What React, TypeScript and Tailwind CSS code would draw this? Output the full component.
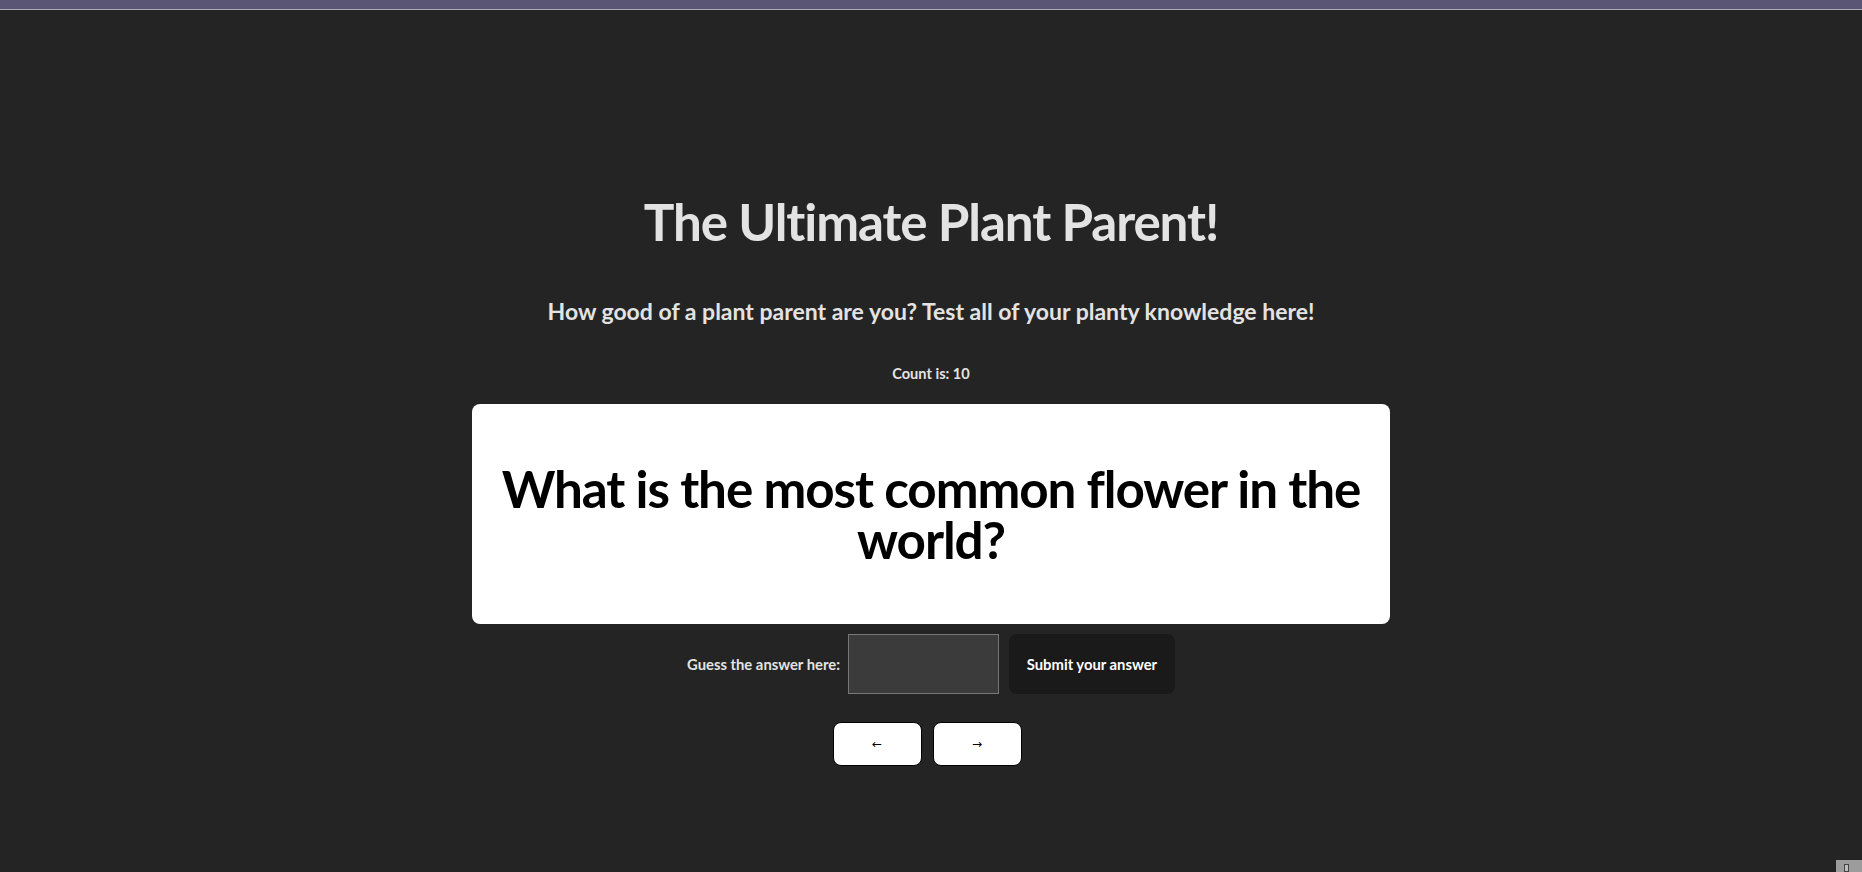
export default function App() {
  return (
    <div
      className="relative flex h-[872px] w-full flex-col items-center overflow-hidden bg-[#242424] font-bold text-[#e3e3e3]"
      style={{ fontFamily: "Lato, 'Open Sans', sans-serif" }}
    >
      {/* Top bar */}
      <div className="h-[9px] w-full shrink-0 bg-[#5a5574]" />
      <div className="h-px w-full shrink-0 bg-[#aeabbd]" />

      <h1 className="mt-[183px] text-[51.2px] leading-[56px] tracking-[-1.1px]">The Ultimate Plant Parent!</h1>

      <h2 className="mt-[47px] text-[23px] leading-[30px]">
        How good of a plant parent are you? Test all of your planty knowledge here!
      </h2>

      <p className="mt-[38px] text-[14.6px] leading-[20px]">Count is: 10</p>

      {/* Question card */}
      <div className="mt-[20px] flex h-[220px] w-[918px] items-center justify-center rounded-lg bg-white px-[22px]">
        <h2 className="text-center text-[51.2px] leading-[51px] tracking-[-1.1px] text-black">
          What is the most common flower in the world?
        </h2>
      </div>

      {/* Answer row */}
      <div className="mt-[10px] flex h-[60px] items-center">
        <label className="mr-[8px] text-[14.8px]">Guess the answer here:</label>
        <input
          type="text"
          className="h-[60px] w-[151px] border border-[#777777] bg-[#3b3b3b] px-2 text-white outline-none"
        />
        <button className="ml-[10px] h-[60px] w-[166px] rounded-lg bg-[#1a1a1a] text-[14.8px] text-white">
          Submit your answer
        </button>
      </div>

      {/* Navigation */}
      <div className="mr-[8px] mt-[28px] flex gap-[11px]">
        <button
          className="flex h-[44px] w-[89px] items-center justify-center rounded-lg border border-black bg-white text-[12px] font-normal text-black"
          style={{ fontFamily: "'DejaVu Sans', sans-serif" }}
        >
          ←
        </button>
        <button
          className="flex h-[44px] w-[89px] items-center justify-center rounded-lg border border-black bg-white text-[12px] font-normal text-black"
          style={{ fontFamily: "'DejaVu Sans', sans-serif" }}
        >
          →
        </button>
      </div>

      {/* Corner widget */}
      <div className="absolute bottom-0 right-0 h-[12px] w-[26px] bg-[#9c9c9c]">
        <div className="ml-[8px] mt-[4px] h-[8px] w-[5px] border border-[#444] bg-[#bdbdbd]" />
      </div>
    </div>
  );
}
